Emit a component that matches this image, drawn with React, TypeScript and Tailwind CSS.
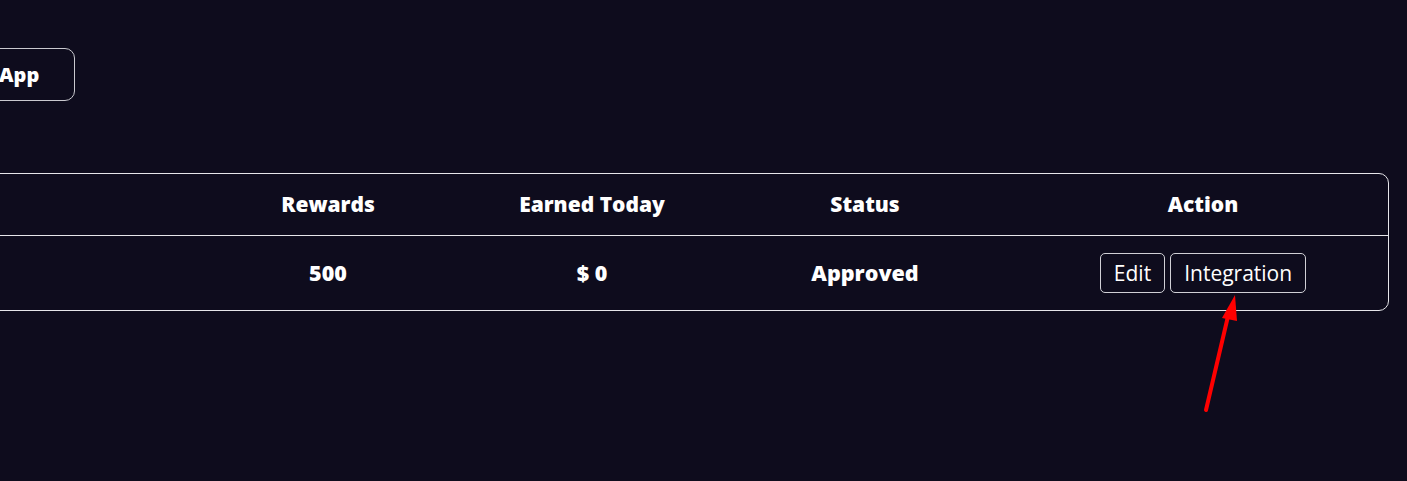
import React from "react";

export default function App() {
  const font = { fontFamily: '"Open Sans", "Liberation Sans", sans-serif' };
  return (
    <div className="relative w-[1407px] h-[481px] overflow-hidden bg-[#0e0c1d] text-white" style={font}>
      <div className="pt-[48px]">
        <button className="ml-[-42px] h-[53px] pl-[40px] pr-[35px] rounded-[10px] border border-[#c9c9cf] text-[20px] font-extrabold leading-none text-white">
          App
        </button>
      </div>
      <div className="mt-[72px] ml-[-20px] w-[1409px] rounded-[10px] border border-[#e6e6ea]">
        <div className="grid grid-cols-[205px_284px_244px_302px_374px] h-[62px] items-center border-b border-[#e6e6ea] text-[21px] font-extrabold">
          <div></div>
          <div className="text-center">Rewards</div>
          <div className="text-center">Earned Today</div>
          <div className="text-center">Status</div>
          <div className="text-center">Action</div>
        </div>
        <div className="grid grid-cols-[205px_284px_244px_302px_374px] h-[74px] items-center font-extrabold">
          <div></div>
          <div className="text-center text-[21.5px]">500</div>
          <div className="text-center text-[21.5px]">$ 0</div>
          <div className="text-center text-[21.5px]">Approved</div>
          <div className="flex justify-center gap-[5px] font-normal">
            <button className="h-[40px] px-[13px] rounded-[5px] border border-[#d0d0d6] text-[21px] leading-none">Edit</button>
            <button className="h-[40px] px-[13px] rounded-[5px] border border-[#d0d0d6] text-[21px] leading-none">Integration</button>
          </div>
        </div>
      </div>
      <svg className="absolute left-0 top-0 pointer-events-none" width="1407" height="481">
        <line x1="1206" y1="410" x2="1229" y2="312" stroke="#ff0000" strokeWidth="4" strokeLinecap="round" />
        <polygon points="1235,295 1222,318 1237,321" fill="#ff0000" />
      </svg>
    </div>
  );
}
